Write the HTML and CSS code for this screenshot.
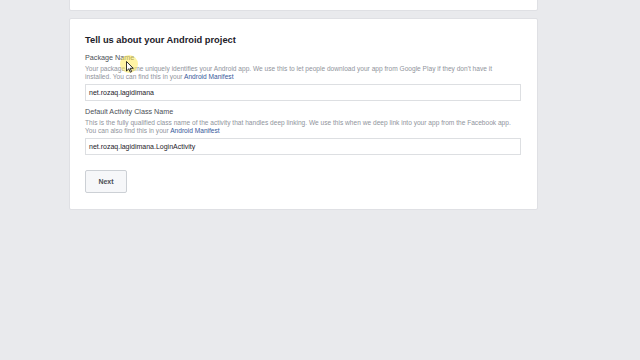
FILE: index.html
```html
<!DOCTYPE html>
<html>
<head>
<link rel="stylesheet" href="styles.css">
</head>
<body>
<div class="page">
  <div class="card card-top"></div>
  <div class="card">
    <h2 class="title">Tell us about your Android project</h2>

    <div class="field">
      <div class="label">Package Name</div>
      <div class="help">Your package name uniquely identifies your Android app. We use this to let people download your app from Google Play if they don't have it<br>installed. You can find this in your <a href="#">Android Manifest</a></div>
      <div class="input">net.rozaq.lagidimana</div>
    </div>

    <div class="field">
      <div class="label">Default Activity Class Name</div>
      <div class="help">This is the fully qualified class name of the activity that handles deep linking. We use this when we deep link into your app from the Facebook app.<br>You can also find this in your <a href="#">Android Manifest</a></div>
      <div class="input">net.rozaq.lagidimana.LoginActivity</div>
    </div>

    <button class="btn">Next</button>
  </div>
</div>
<div class="cursor">
  <svg width="8" height="12" viewBox="0 0 8 12"><path d="M0.5,0.5 L0.5,10 L2.8,7.8 L4.3,11.2 L5.6,10.6 L4.1,7.3 L7.2,7.3 Z" fill="#fff" stroke="#000" stroke-width="0.8"/></svg>
</div>
</body>
</html>
```

FILE: styles.css
```css
* {
  box-sizing: border-box;
}

body {
  margin: 0;
  background: #e9eaed;
  font-family: "Liberation Sans", Arial, sans-serif;
  color: #4b4f56;
}

.page {
  width: 469px;
  margin-left: 69px;
  margin-top: -4px;
}

.card {
  background: #fff;
  border: 1px solid #dfe0e4;
  border-radius: 2px;
  padding: 16px 16px 16px 15px;
  margin-bottom: 7px;
}

.card-top {
  height: 15px;
  padding: 0;
}

.title {
  margin: 0 0 8px 0;
  font-size: 9.3px;
  font-weight: bold;
  color: #1d2129;
}

.field {
  margin-bottom: 6px;
}

.label {
  font-size: 7.2px;
  color: #4b4f56;
  margin-bottom: 3px;
}

.help {
  font-size: 6.6px;
  line-height: 8px;
  color: #90949c;
  margin-bottom: 3px;
  white-space: nowrap;
}

.help a {
  color: #365899;
  text-decoration: none;
}

.input {
  height: 17px;
  border: 1px solid #dddfe2;
  font-size: 7px;
  line-height: 15px;
  padding-left: 3px;
  color: #1d2129;
}

.btn {
  margin-top: 9px;
  width: 42px;
  height: 23px;
  border: 1px solid #ccd0d5;
  border-radius: 2px;
  background: #f6f7f9;
  font-family: "Liberation Sans", Arial, sans-serif;
  font-size: 7px;
  font-weight: bold;
  color: #4b4f56;
  padding: 0;
}

.cursor {
  position: absolute;
  left: 120px;
  top: 55px;
  width: 18px;
  height: 18px;
  border-radius: 50%;
  background: rgba(255, 235, 90, 0.55);
}

.cursor svg {
  position: absolute;
  left: 6px;
  top: 6px;
}
```
